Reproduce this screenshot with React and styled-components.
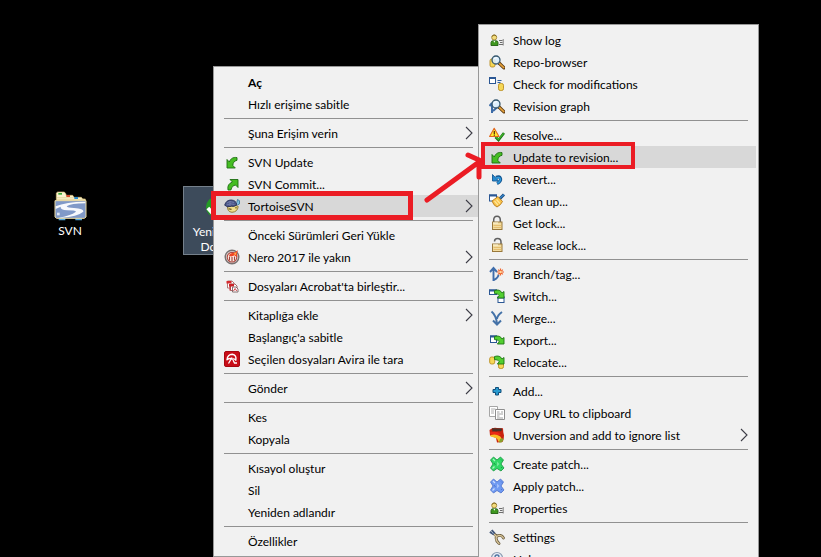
import React from "react";
import styled, { createGlobalStyle, css } from "styled-components";

const GlobalStyle = createGlobalStyle`
  * { box-sizing: border-box; }
  body { margin: 0; background: #000; overflow: hidden; }
`;

const Desktop = styled.main`
  position: relative;
  width: 100%;
  height: 100vh;
  overflow: hidden;
  background: #000;
  font-family: Lato, "Open Sans", sans-serif;
  font-size: 12px;
  color: #000;
`;

const Shortcut = styled.button`
  position: absolute;
  left: ${(p) => p.$x}px;
  top: 186px;
  width: 76px;
  height: 69px;
  padding: 4px 0 0;
  display: flex;
  flex-direction: column;
  align-items: center;
  gap: 2px;
  font: inherit;
  line-height: 15px;
  color: #fff;
  background: transparent;
  border: 1px solid transparent;
  ${(p) =>
    p.$selected &&
    css`
      background: #3d4b5b;
      border-color: #75808b;
    `}
`;

const Menu = styled.ul`
  position: absolute;
  left: ${(p) => p.$x}px;
  top: ${(p) => p.$y}px;
  width: ${(p) => p.$w}px;
  margin: 0;
  padding: 4px 2px;
  list-style: none;
  background: #f1f1f1;
  border: 1px solid #989898;
`;

const Item = styled.button`
  display: flex;
  align-items: center;
  gap: 8px;
  width: 100%;
  height: 22px;
  padding: 0 8px;
  border: 0;
  font: inherit;
  font-weight: ${(p) => (p.$bold ? 700 : 400)};
  text-align: left;
  white-space: nowrap;
  color: #000;
  background: ${(p) => (p.$active ? "#d8d8d8" : "transparent")};
`;

const IconSlot = styled.span`
  display: flex;
  flex: 0 0 16px;
  height: 16px;
`;

const Label = styled.span`
  flex: 1;
`;

const Divider = styled.li`
  height: 1px;
  margin: 3px 8px;
  background: #919191;
`;

const Frame = styled.div`
  position: absolute;
  left: ${(p) => p.$x}px;
  top: ${(p) => p.$y}px;
  width: ${(p) => p.$w}px;
  height: ${(p) => p.$h}px;
  border: ${(p) => p.$t}px solid #eb1c24;
  pointer-events: none;
`;

const Arrow = styled.svg`
  position: absolute;
  left: 420px;
  top: 150px;
  pointer-events: none;
`;

const Svg = ({ children }) => (
  <svg width="16" height="16" viewBox="0 0 16 16" aria-hidden="true">
    {children}
  </svg>
);

const Chevron = () => (
  <svg width="8" height="14" viewBox="0 0 8 14" aria-hidden="true">
    <path d="M1 1l6 6-6 6" fill="none" stroke="#3c3c46" strokeWidth="1.1" />
  </svg>
);

const UpdateArrow = () => (
  <path
    d="M3 5.500V14h8.300L8.900 11.500C8.800 9 10 7 13 6.300V3.600C9 2.800 6.500 4.800 5.300 8z"
    fill="#45bd22"
    stroke="#1d6d12"
    strokeWidth=".9"
    strokeLinejoin="round"
  />
);

const Magnifier = () => (
  <>
    <path d="M10 9l5 4.800" stroke="#5c3a12" strokeWidth="3.400" strokeLinecap="round" />
    <path d="M10.300 9.400l4.500 4.200" stroke="#e8a33a" strokeWidth="1.500" strokeLinecap="round" />
    <circle cx="7" cy="6" r="4" fill="#d9efff" fillOpacity=".85" stroke="#34566d" strokeWidth="1.300" />
    <path d="M4.800 5.500Q5.800 3.500 8 3.700" fill="none" stroke="#fff" />
  </>
);

const Drum = ({ x, y, w = 5, h = 7 }) => (
  <rect x={x} y={y} width={w} height={h} rx="1.800" fill="#f6d756" stroke="#b98d1f" strokeWidth=".9" />
);

const MiniWindow = ({ x, y, w = 7, h = 6 }) => (
  <>
    <rect x={x} y={y} width={w} height={h} fill="#fff" stroke="#2b5794" strokeWidth="1" />
    <path d={`M${x - 0.5} ${y + 0.5}h${w + 1}`} stroke="#2b5794" strokeWidth="2" />
  </>
);

const CurveRight = () => (
  <path
    d="M5.500 2.500Q11 .8 13 5L15 3.500V10H8.300L10.300 7.800Q9.500 5.500 5.500 5.500z"
    fill="#52cf30"
    stroke="#1d7414"
    strokeWidth=".9"
    strokeLinejoin="round"
  />
);

const Person = () => (
  <>
    <circle cx="5.200" cy="5.500" r="2.500" fill="#f3dc7c" stroke="#9b7a25" strokeWidth=".8" />
    <path d="M3 4.700Q3.700 2.500 6.200 3l1.300 1.500" fill="none" stroke="#7d631b" strokeWidth=".9" />
    <path d="M2 13.500V10.500Q2.200 8.700 4.200 8.700H6.700Q8.900 8.700 9 10.500V13.500z" fill="#3f981f" stroke="#235f12" strokeWidth=".9" />
    <path d="M4.400 8.700l1 2 1-2" fill="#fff" />
    <path d="M10 8.500h3.500M11 10.500h2.500M10 12.500h4" stroke="#6c6c6c" strokeWidth="1" />
    <path d="M14.200 7v6.500" stroke="#777" strokeWidth=".9" />
  </>
);

const Padlock = ({ open }) => (
  <>
    <path
      d={open ? "M5.500 4.500Q5.500 1.500 8.500 1.500Q12 1.500 12 5V8" : "M4.700 8V5Q4.700 1.200 8 1.200T11.300 5V8"}
      fill="none"
      stroke="#5f5f5f"
      strokeWidth="1.500"
    />
    <rect x="3.500" y="7" width="9.500" height="7.500" fill="#f3dca0" stroke="#99783b" />
    <path d="M4 8h5" stroke="#fff8dc" strokeWidth="1" />
    <path d="M4.500 10.500h8M4.500 12.500h8" stroke="#dfb562" strokeWidth=".8" />
  </>
);

const Patch = ({ fill, dark, light }) => (
  <>
    <path
      d="M4.500 1L8 4l3.500-3 3 3-2.500 4 3 4-3 3L8 12.500 4.500 15l-3-3L4 8 1.500 4z"
      fill={fill}
      stroke={dark}
      strokeWidth=".8"
      strokeLinejoin="round"
    />
    <path d="M4 3l2 2M3.500 12.500l2-2" stroke={light} strokeWidth="1.300" />
    <path d="M8 5.500l2.500 2.500L8 10.500z" fill={light} opacity=".6" />
    <path d="M12 3.500l1 1M12 12l1-1M5 7l1.500 2" stroke={dark} strokeWidth=".8" />
  </>
);

const icons = {
  update: <UpdateArrow />,
  commit: (
    <path
      d="M6 3.500H14V11.500l-2.300-2.400Q8 9.300 6.900 14H4Q2.800 8 8.500 6z"
      fill="#45bd22"
      stroke="#1d6d12"
      strokeWidth=".9"
      strokeLinejoin="round"
    />
  ),
  tortoise: (
    <>
      <path d="M3.500 8Q3 13.800 8 14.300Q13.500 14 14.200 8.500L12 7.500z" fill="#f0df8a" stroke="#8b732b" strokeWidth=".9" />
      <path d="M.7 7.200Q2 2 7.200 2Q12.500 2.300 12.800 7Q10 9 7.500 8.200Q3.500 10 .7 7.200z" fill="#4a5688" stroke="#242d57" strokeWidth=".9" />
      <path d="M3 5l3-1.500 4 1M2.500 7l4-1.200 4 .7M6 3.500v4.500" stroke="#8791bc" strokeWidth=".6" fill="none" />
      <path d="M12.800 4.500l.7-3 2 1.200v3.200l-2.200 1.200" fill="#7fbfe0" stroke="#2f6c94" strokeWidth=".8" />
      <path d="M4.500 10.800l3 .6M12 9v1.500" stroke="#5d4b18" strokeWidth="1.100" />
    </>
  ),
  nero: (
    <>
      <circle cx="8" cy="8" r="6.800" fill="#dcd8d6" stroke="#7a7272" strokeWidth="1.400" />
      <circle cx="8" cy="8.200" r="4.800" fill="#fff4ee" stroke="#b0483f" strokeWidth="1.100" />
      <path d="M5.500 11.500V7.500M8 12.500V8M10.500 11.500V7.500" stroke="#a3453c" strokeWidth="1.200" />
      <path d="M5 6.800Q6 3.500 9.500 4l4.500-2.800Q12.300 4.500 13.500 7.500Q11 7.500 10.500 6.300Q8 8.300 5 6.800z" fill="#ee4523" />
      <path d="M9.500 5l3-2-.6 3z" fill="#ffb04a" />
    </>
  ),
  acrobat: (
    <>
      <path d="M3.500 3h4.500l2 2v5H3.500z" fill="#fff" stroke="#a66" strokeWidth=".9" />
      <path d="M2.500 3h5v2.500h-5z" fill="#d52b2f" />
      <path d="M6.500 6h4.500l2 2V12.500H6.500z" fill="#fff" stroke="#955" strokeWidth=".9" />
      <path d="M5 6h5v2.500H5z" fill="#ca2328" />
      <path d="M6 6v6.500" stroke="#ca2328" />
      <path d="M8.500 9h3.500l2 2V14H8.500z" fill="#fff" stroke="#7c6263" strokeWidth=".9" />
      <path d="M9.500 13l1.600-2.500 1.600 2.500" fill="none" stroke="#cf3237" strokeWidth=".9" />
    </>
  ),
  avira: (
    <>
      <rect x=".5" y=".5" width="15" height="15" rx="1.500" fill="#c80d18" stroke="#a70710" />
      <path d="M3 8.800Q3.500 3.500 8.300 3.300Q12.800 4 11.800 9.200Q10.300 7.200 8.500 8.200Q6 6.500 3 8.800z" fill="none" stroke="#fff" strokeWidth="1.400" strokeLinejoin="round" />
      <path d="M8 6.500L4.500 12.500M9 9l1.500 3h2.500" fill="none" stroke="#fff" strokeWidth="1.300" />
    </>
  ),
  person: <Person />,
  repo: (
    <>
      <Drum x={1} y={5} w={5} h={8} />
      <Magnifier />
    </>
  ),
  check: (
    <>
      <MiniWindow x={0.5} y={1.5} w={6} h={6} />
      <path d="M8.500 4.500h4M8.500 6.500h3" stroke="#2f5f9f" strokeWidth="1" />
      <Drum x={9.5} y={7.5} w={5} h={7} />
    </>
  ),
  graph: (
    <>
      <path d="M3 5v10M.5 8L3 5M4 13l4.500-4" stroke="#3c6ba7" strokeWidth="2" fill="none" />
      <Magnifier />
    </>
  ),
  resolve: (
    <>
      <path d="M6.500 10l3 3L15 6" fill="none" stroke="#177413" strokeWidth="2.600" />
      <path d="M6.800 10l2.700 2.500L14.600 6.300" fill="none" stroke="#42b52c" strokeWidth="1.200" />
      <path d="M5.200 1.300L10 9.500H.6z" fill="#ffe92e" stroke="#e2681e" strokeWidth="1.100" strokeLinejoin="round" />
      <path d="M5.300 4v3M5.300 7.600v1.100" stroke="#582408" strokeWidth="1.200" />
    </>
  ),
  revert: (
    <>
      <path d="M8 12.500Q12.300 10.500 11.500 7.500Q10.500 4.800 7 6.500" fill="none" stroke="#155894" strokeWidth="3.200" />
      <path d="M3.500 3.500v6.500h6L7.800 8l-2-2z" fill="#278bd0" stroke="#155894" strokeWidth=".9" />
      <path d="M8.300 12.300Q12 10 11.300 7.700Q10.300 5.500 6.800 7.200" fill="none" stroke="#2e9add" strokeWidth="1.500" />
    </>
  ),
  cleanup: (
    <>
      <MiniWindow x={0.5} y={2} />
      <path d="M10.500 6L15 1.500" stroke="#17467c" strokeWidth="3" />
      <path d="M10.500 5.500L15 1.500" stroke="#3989cb" strokeWidth="1.200" />
      <path d="M3 8L9 3.500 13.500 8.500Q12 12 8 14Q4.500 12.500 3 8z" fill="#f8c24a" stroke="#b87a1c" strokeWidth=".9" />
      <path d="M5.500 8l3.500 4M7.500 6.500l3.500 4" stroke="#ffe69a" strokeWidth="1.200" />
    </>
  ),
  lock: <Padlock />,
  unlock: <Padlock open />,
  branch: (
    <>
      <path d="M4.500 15V2M1 6l3.500-4L8 6M5 14Q9.500 11.500 9.500 8.500" fill="none" stroke="#3f6dab" strokeWidth="1.900" />
      <path d="M11.500 2.500v7M8 6h7M9.200 3.700l4.600 4.600M13.800 3.700L9.200 8.300" stroke="#f1632b" strokeWidth="1.200" />
      <circle cx="11.500" cy="6" r="1.300" fill="#ffd9a0" />
    </>
  ),
  switch: (
    <>
      <MiniWindow x={0.5} y={2} w={7} h={4.5} />
      <MiniWindow x={9} y={9} w={6} h={5.5} />
      <CurveRight />
    </>
  ),
  merge: (
    <path d="M2.500 1.500Q7.500 5.500 8 14.500M13 2Q8.500 5 8 9M4 10.500l4 4 4-4" fill="none" stroke="#4472a8" strokeWidth="2" />
  ),
  export: (
    <>
      <MiniWindow x={1.5} y={4} w={6} h={6.5} />
      <g transform="translate(0 2)">
        <CurveRight />
      </g>
    </>
  ),
  relocate: (
    <>
      <Drum x={0.7} y={3} />
      <Drum x={9.5} y={7.500} />
      <CurveRight />
    </>
  ),
  add: (
    <path d="M6.500 4.500h3v2h2.500v3H9.500v2.500h-3V9.500H4v-3h2.500z" fill="#299bd0" stroke="#114e7b" strokeWidth="1" />
  ),
  copy: (
    <>
      <path d="M.5 1.500h8v10h-8z" fill="#fff" stroke="#a6a6a6" />
      <path d="M2 4h4.500M2 6h3M2 8h3" stroke="#b0b0b0" />
      <path d="M6.500 4.500h9v10h-9z" fill="#fff" stroke="#8e8e8e" />
      <path d="M8 7h2.500M12 7h2M8 9h6M8 11h2.500M8 13h6" stroke="#a0a0a0" />
    </>
  ),
  ignore: (
    <>
      <path d="M.5 3Q4 0 8 1l6 .3Q14 5 15 8.500Q15 12.500 13.500 15L8 15.500L7 11 1 8.500z" fill="#c9220f" />
      <path d="M3 1.200l10 .3Q13.500 5 9 4.200L3.500 5z" fill="#4b3128" />
      <path d="M1.500 5Q8 3.500 12 7.500Q9 9 1.500 7z" fill="#ea2a14" />
      <path d="M1.500 8Q7 6.500 10.500 9Q13.500 11 12.500 14.500H9Q10 11 1.500 9.500z" fill="#f8bc26" />
      <path d="M11 12Q14.500 10 14.500 13L12.500 15.500H10z" fill="#8aa02b" />
    </>
  ),
  createPatch: <Patch fill="#30d865" dark="#13933b" light="#a4f6bb" />,
  applyPatch: <Patch fill="#6f9af2" dark="#4a6ec8" light="#cbdcff" />,
  settings: (
    <>
      <path d="M3 3l4.500 4Q6 11 10 14.500M7.500 7.500Q12 4.500 14.500 9" fill="none" stroke="#6d5f42" strokeWidth="2.800" strokeLinecap="round" />
      <path d="M5 5l2.500 2.500Q6 11 10 14.500M8 7.200Q12 5 14.500 9" fill="none" stroke="#dcc89b" strokeWidth="1.300" strokeLinecap="round" />
      <path d="M.8 3l4 2.500M2.800 1l3 3.500" stroke="#42577d" strokeWidth="1.800" />
      <path d="M2 1.800l2.500 3" stroke="#bad1eb" strokeWidth=".8" />
    </>
  ),
  help: (
    <>
      <circle cx="8" cy="7" r="5.500" fill="#e7eef7" stroke="#8a9ab0" strokeWidth="1.200" />
      <path d="M6 6Q6 3.800 8 3.800Q10.300 4 9.800 6Q8 7 8 9M8 10v1.500" fill="none" stroke="#4a6f9d" strokeWidth="1.300" />
    </>
  ),
};

const shellItems = [
  { label: "Aç", bold: true },
  { label: "Hızlı erişime sabitle" },
  null,
  { label: "Şuna Erişim verin", sub: true },
  null,
  { label: "SVN Update", icon: "update" },
  { label: "SVN Commit...", icon: "commit" },
  { label: "TortoiseSVN", icon: "tortoise", sub: true, active: true },
  null,
  { label: "Önceki Sürümleri Geri Yükle" },
  { label: "Nero 2017 ile yakın", icon: "nero", sub: true },
  null,
  { label: "Dosyaları Acrobat'ta birleştir...", icon: "acrobat" },
  null,
  { label: "Kitaplığa ekle", sub: true },
  { label: "Başlangıç'a sabitle" },
  { label: "Seçilen dosyaları Avira ile tara", icon: "avira" },
  null,
  { label: "Gönder", sub: true },
  null,
  { label: "Kes" },
  { label: "Kopyala" },
  null,
  { label: "Kısayol oluştur" },
  { label: "Sil" },
  { label: "Yeniden adlandır" },
  null,
  { label: "Özellikler" },
];

const svnItems = [
  { label: "Show log", icon: "person" },
  { label: "Repo-browser", icon: "repo" },
  { label: "Check for modifications", icon: "check" },
  { label: "Revision graph", icon: "graph" },
  null,
  { label: "Resolve...", icon: "resolve" },
  { label: "Update to revision...", icon: "update", active: true },
  { label: "Revert...", icon: "revert" },
  { label: "Clean up...", icon: "cleanup" },
  { label: "Get lock...", icon: "lock" },
  { label: "Release lock...", icon: "unlock" },
  null,
  { label: "Branch/tag...", icon: "branch" },
  { label: "Switch...", icon: "switch" },
  { label: "Merge...", icon: "merge" },
  { label: "Export...", icon: "export" },
  { label: "Relocate...", icon: "relocate" },
  null,
  { label: "Add...", icon: "add" },
  { label: "Copy URL to clipboard", icon: "copy" },
  { label: "Unversion and add to ignore list", icon: "ignore", sub: true },
  null,
  { label: "Create patch...", icon: "createPatch" },
  { label: "Apply patch...", icon: "applyPatch" },
  { label: "Properties", icon: "person" },
  null,
  { label: "Settings", icon: "settings" },
  { label: "Help", icon: "help" },
];

const ContextMenu = ({ items, name, x, y, w }) => (
  <Menu role="menu" aria-label={name} $x={x} $y={y} $w={w}>
    {items.map((item, i) =>
      item ? (
        <li key={i} role="none">
          <Item type="button" role="menuitem" aria-haspopup={item.sub ? "menu" : undefined} $bold={item.bold} $active={item.active}>
            <IconSlot>{item.icon && <Svg>{icons[item.icon]}</Svg>}</IconSlot>
            <Label>{item.label}</Label>
            {item.sub && <Chevron />}
          </Item>
        </li>
      ) : (
        <Divider key={i} role="separator" />
      )
    )}
  </Menu>
);

const FolderIcon = () => (
  <svg width="33" height="30" viewBox="0 0 99 90" aria-hidden="true">
    <path d="M14 80h20v8H14zM64 80h20v8H64z" fill="#55a7dc" />
    <path d="M7 26V6l4-3h20l5 6v4h20l4 6h22l4 5h8v6H7z" fill="#fbf3cf" stroke="#d5bc72" strokeWidth="2" />
    <path d="M9 20h50M9 25h82" stroke="#dfca8b" strokeWidth="2" />
    <rect x="13" y="6" width="11" height="5" fill="#38a936" />
    <rect x="37" y="12" width="11" height="6" fill="#d84c2f" />
    <rect x="61" y="18" width="11" height="6" fill="#278ace" />
    <path d="M3 29h93v49l-5 4H8l-5-4z" fill="#8099c8" stroke="#ead9a0" strokeWidth="3" />
    <path d="M5 46Q35 32 94 32v5Q50 37 38 46Q40 51 60 51Q90 53 88 62Q70 77 22 80H12Q50 74 66 62Q64 58 40 58Q18 57 20 47L5 54z" fill="#f7f9fd" />
    <path d="M9 65h8v8H9z" fill="#dce6f4" />
  </svg>
);

const CheckedFolder = () => (
  <svg width="36" height="33" viewBox="0 0 36 33" aria-hidden="true">
    <path d="M14 2h8l3 4h9v22H14z" fill="#f4d778" />
    <circle cx="13" cy="17" r="11" fill="#249b25" />
    <path d="M4 18l7 8L22 12" fill="none" stroke="#fff" strokeWidth="4" />
  </svg>
);

export default function App() {
  return (
    <Desktop>
      <GlobalStyle />
      <Shortcut type="button" $x={32}>
        <FolderIcon />
        <span>SVN</span>
      </Shortcut>
      <Shortcut type="button" $x={183} $selected>
        <CheckedFolder />
        <span>
          Yeni Metin
          <br />
          Dosyası
        </span>
      </Shortcut>
      <ContextMenu name="Klasör" items={shellItems} x={213} y={66} w={271} />
      <ContextMenu name="TortoiseSVN" items={svnItems} x={478} y={24} w={281} />
      <Frame $x={211} $y={191} $w={202} $h={29} $t={5} />
      <Frame $x={481} $y={142} $w={154} $h={27} $t={4} />
      <Arrow width="64" height="56" viewBox="0 0 64 56" aria-hidden="true">
        <path d="M7 50L59 12M48 5l11 5M59 12v15" fill="none" stroke="#eb1c24" strokeWidth="5" strokeLinecap="round" strokeLinejoin="round" />
      </Arrow>
    </Desktop>
  );
}
